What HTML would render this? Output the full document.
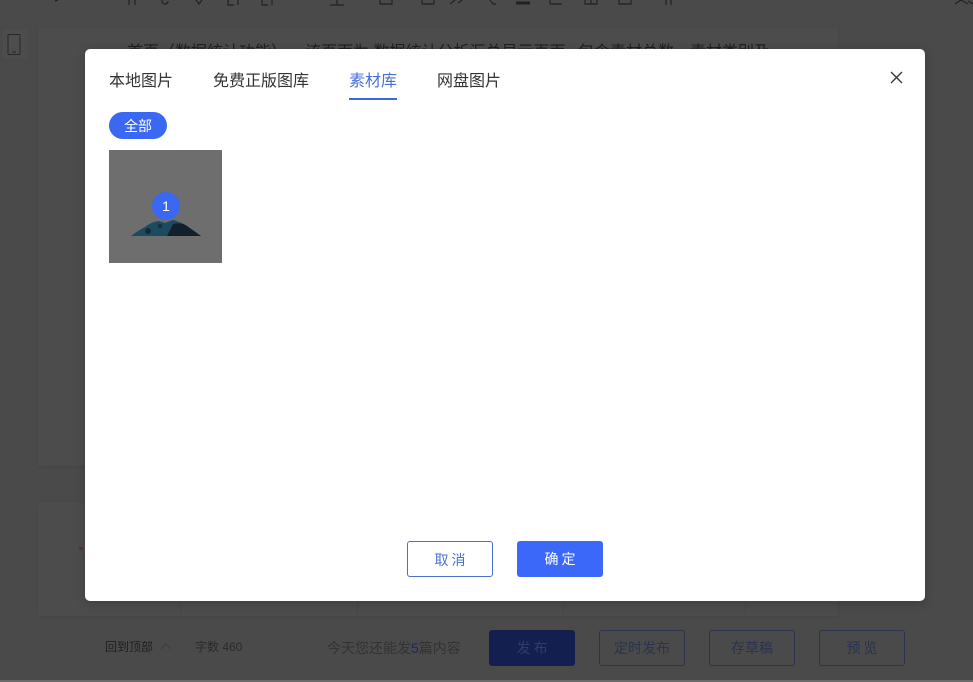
<!DOCTYPE html>
<html lang="zh">
<head>
<meta charset="utf-8">
<style>
html,body{margin:0;padding:0;width:973px;height:682px;overflow:hidden;background:#4a4a4a;font-family:"Liberation Sans","Noto Sans CJK SC",sans-serif}
.abs,.abs *,.bbtn{box-sizing:border-box}
.abs{position:absolute}
.t{position:absolute;white-space:nowrap;line-height:1}
.panel{position:absolute;background:#4c4c4c;box-shadow:0 1px 3px rgba(0,0,0,.08)}
.bbtn{position:absolute;top:630px;width:86px;height:36px;border:1px solid #2b3350;border-radius:3px;color:#2a3350;font-size:14px;line-height:35px;text-align:center}
#modal{position:absolute;left:85px;top:49px;width:840px;height:552px;background:#fff;border-radius:5px;box-shadow:0 2px 10px rgba(0,0,0,.2)}
.tab{position:absolute;top:23px;font-size:16px;line-height:20px;color:#333;white-space:nowrap}
</style>
</head>
<body>
<!-- background -->
<div class="panel" style="left:38px;top:28px;width:800px;height:438px"></div>
<div class="panel" style="left:38px;top:502px;width:800px;height:114px"></div>
<div class="abs" style="left:0;top:680px;width:973px;height:2px;background:#6a6a6a"></div>

<!-- phone icon -->
<div class="abs" style="left:3px;top:30px;width:25px;height:28px;background:#4d4d4d"></div>
<svg class="abs" style="left:7px;top:34px" width="14" height="22" viewBox="0 0 14 22"><rect x="1" y="0.5" width="12" height="20" rx="1" fill="none" stroke="#272727" stroke-width="1"/><path d="M5 18h4" stroke="#272727"/></svg>

<!-- toolbar fragments -->
<svg class="abs" style="left:0;top:0" width="973" height="6" viewBox="0 0 973 6" fill="none" stroke="#222" stroke-width="1.2">
<path d="M55 1l3-1M129 0v5M135 0v5M162 0v1q0 3 3 3t3-3M196 0l3 4 3-4M228 0v5h6M238 0v5M262 0v5h6M272 0v5"/>
<path d="M330 5h14M337 0v5"/>
<path d="M380 0v4h12v-4M422 0v4h12v-4"/>
<path d="M450 4l5-4M458 3l4-3"/>
<path d="M490 0l3 4h3"/>
<path d="M516 3h14" stroke-width="3"/>
<path d="M550 0v4h12"/>
<path d="M585 0v4h12v-4M591 0v4"/>
<path d="M619 0v4h12v-4"/>
<path d="M666 0v5M671 0v5"/>
<path d="M955 4l6-4M961 0l7 4M968 1l5 3"/>
</svg>

<!-- text clipped behind modal -->
<div class="t" style="left:127px;top:45px;font-size:16px;color:#1f1f1f">首页（数据统计功能）</div>
<div class="t" style="left:305px;top:45px;font-size:16px;color:#1f1f1f">该页面为 数据统计分析汇总显示页面，</div>
<div class="t" style="left:578px;top:45px;font-size:16px;color:#1f1f1f">包含素材总数、素材类别及</div>

<!-- red dot + table lines -->
<div class="abs" style="left:79px;top:547px;width:4px;height:3px;border-radius:2px;background:#5c3030"></div>
<div class="abs" style="left:180px;top:601px;width:1px;height:15px;background:#474747"></div>
<div class="abs" style="left:357px;top:601px;width:1px;height:15px;background:#474747"></div>
<div class="abs" style="left:563px;top:601px;width:1px;height:15px;background:#474747"></div>
<div class="abs" style="left:745px;top:601px;width:1px;height:15px;background:#474747"></div>

<!-- bottom bar -->
<div class="t" style="left:105px;top:641px;font-size:12px;color:#202020">回到顶部</div>
<svg class="abs" style="left:160px;top:642px" width="12" height="8" viewBox="0 0 12 8"><path d="M1 7l5-5 5 5" fill="none" stroke="#3c3c3c"/></svg>
<div class="t" style="left:195px;top:641px;font-size:12px;color:#2a2a2a">字数 460</div>
<div class="t" style="left:327px;top:641px;font-size:14px;color:#333">今天您还能发<span style="color:#1e2a55">5</span>篇内容</div>
<div class="bbtn" style="left:489px;background:#13204f;border-color:#13204f;color:#2f3d6e;letter-spacing:3px;padding-left:3px">发布</div>
<div class="bbtn" style="left:599px">定时发布</div>
<div class="bbtn" style="left:709px">存草稿</div>
<div class="bbtn" style="left:819px;letter-spacing:3px;padding-left:3px">预览</div>

<!-- modal -->
<div id="modal" class="abs">
  <div class="tab" style="left:24px">本地图片</div>
  <div class="tab" style="left:128px">免费正版图库</div>
  <div class="tab" style="left:264px;color:#4a6fd8">素材库</div>
  <div class="abs" style="left:264px;top:49px;width:48px;height:2px;background:#3b66e0"></div>
  <div class="tab" style="left:352px">网盘图片</div>
  <svg class="abs" style="left:805px;top:22px" width="13" height="13" viewBox="0 0 13 13"><path d="M1 1l11 11M12 1L1 12" stroke="#333" stroke-width="1.3" fill="none"/></svg>

  <div class="abs" style="left:24px;top:63px;width:58px;height:27px;border-radius:14px;background:#3b68f2;color:#fff;font-size:14px;line-height:28px;text-align:center">全部</div>

  <div class="abs" style="left:24px;top:101px;width:113px;height:113px;background:#6e6e6e"></div>
  <svg class="abs" style="left:24px;top:101px" width="113" height="113" viewBox="0 0 113 113">
    <path d="M22 86Q30 80 36 77Q42 72 50 71L56 73L64 70Q72 72 78 76Q85 81 92 86Z" fill="#1c4a5e"/>
    <path d="M58 86L64 74Q72 72 78 76Q85 81 92 86Z" fill="#12202c"/>
    <circle cx="39" cy="81" r="3" fill="#122a38"/><circle cx="51" cy="76" r="2" fill="#143040"/>
  </svg>
  <div class="abs" style="left:67px;top:143px;width:28px;height:28px;border-radius:50%;background:#3b68f2;color:#fff;font-size:14px;line-height:28px;text-align:center">1</div>

  <div class="abs" style="left:322px;top:492px;width:86px;height:36px;border:1px solid #4d6fd0;border-radius:3px;background:#fff;color:#4a6fd0;font-size:14px;line-height:36px;text-align:center;letter-spacing:3px;padding-left:3px">取消</div>
  <div class="abs" style="left:432px;top:492px;width:86px;height:36px;border-radius:3px;background:#3b68f8;color:#fff;font-size:14px;line-height:37px;text-align:center;letter-spacing:3px;padding-left:3px">确定</div>
</div>
</body>
</html>
